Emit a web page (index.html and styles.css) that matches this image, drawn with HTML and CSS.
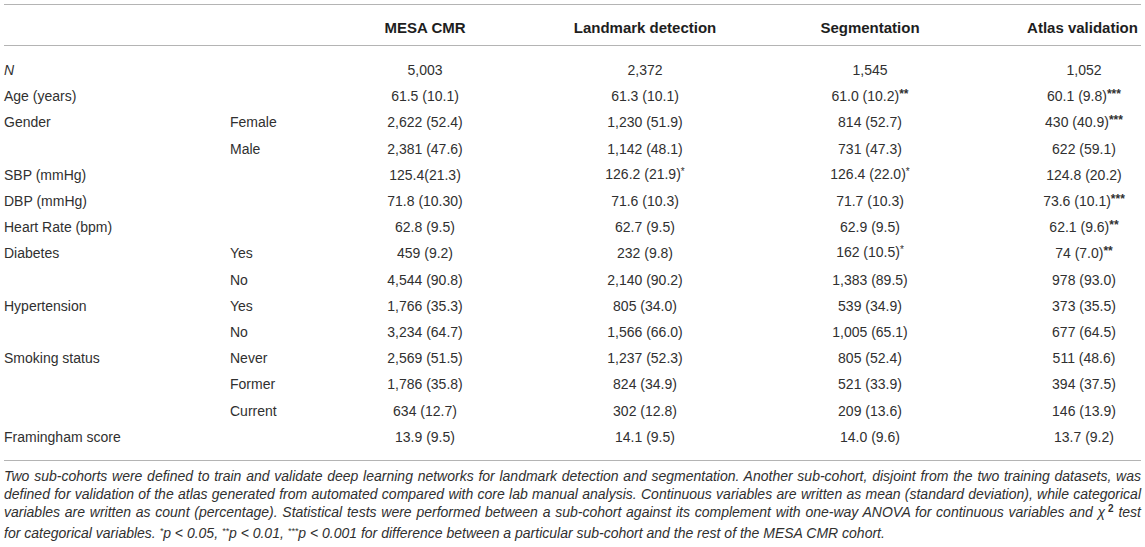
FILE: index.html
```html
<!DOCTYPE html>
<html lang="en">
<head>
<meta charset="utf-8">
<title>MESA CMR sub-cohorts</title>
<link rel="stylesheet" href="styles.css">
</head>
<body>
<div class="page">
  <table class="data">
    <colgroup>
      <col class="c-label">
      <col class="c-sub">
      <col class="c-mesa">
      <col class="c-land">
      <col class="c-seg">
      <col class="c-atlas">
    </colgroup>
    <thead>
      <tr>
        <th class="lbl"></th>
        <th class="sub"></th>
        <th>MESA CMR</th>
        <th>Landmark detection</th>
        <th>Segmentation</th>
        <th class="last">Atlas validation</th>
      </tr>
    </thead>
    <tbody>
      <tr class="first">
        <td class="lbl"><i>N</i></td><td class="sub"></td>
        <td>5,003</td><td>2,372</td><td>1,545</td><td class="last">1,052</td>
      </tr>
      <tr>
        <td class="lbl">Age (years)</td><td class="sub"></td>
        <td>61.5 (10.1)</td><td>61.3 (10.1)</td><td>61.0 (10.2)<span class="sig">**</span></td><td class="last">60.1 (9.8)<span class="sig">***</span></td>
      </tr>
      <tr>
        <td class="lbl">Gender</td><td class="sub">Female</td>
        <td>2,622 (52.4)</td><td>1,230 (51.9)</td><td>814 (52.7)</td><td class="last">430 (40.9)<span class="sig">***</span></td>
      </tr>
      <tr>
        <td class="lbl"></td><td class="sub">Male</td>
        <td>2,381 (47.6)</td><td>1,142 (48.1)</td><td>731 (47.3)</td><td class="last">622 (59.1)</td>
      </tr>
      <tr>
        <td class="lbl">SBP (mmHg)</td><td class="sub"></td>
        <td>125.4(21.3)</td><td>126.2 (21.9)<span class="sig1">*</span></td><td>126.4 (22.0)<span class="sig1">*</span></td><td class="last">124.8 (20.2)</td>
      </tr>
      <tr>
        <td class="lbl">DBP (mmHg)</td><td class="sub"></td>
        <td>71.8 (10.30)</td><td>71.6 (10.3)</td><td>71.7 (10.3)</td><td class="last">73.6 (10.1)<span class="sig">***</span></td>
      </tr>
      <tr>
        <td class="lbl">Heart Rate (bpm)</td><td class="sub"></td>
        <td>62.8 (9.5)</td><td>62.7 (9.5)</td><td>62.9 (9.5)</td><td class="last">62.1 (9.6)<span class="sig">**</span></td>
      </tr>
      <tr>
        <td class="lbl">Diabetes</td><td class="sub">Yes</td>
        <td>459 (9.2)</td><td>232 (9.8)</td><td>162 (10.5)<span class="sig1">*</span></td><td class="last">74 (7.0)<span class="sig">**</span></td>
      </tr>
      <tr>
        <td class="lbl"></td><td class="sub">No</td>
        <td>4,544 (90.8)</td><td>2,140 (90.2)</td><td>1,383 (89.5)</td><td class="last">978 (93.0)</td>
      </tr>
      <tr>
        <td class="lbl">Hypertension</td><td class="sub">Yes</td>
        <td>1,766 (35.3)</td><td>805 (34.0)</td><td>539 (34.9)</td><td class="last">373 (35.5)</td>
      </tr>
      <tr>
        <td class="lbl"></td><td class="sub">No</td>
        <td>3,234 (64.7)</td><td>1,566 (66.0)</td><td>1,005 (65.1)</td><td class="last">677 (64.5)</td>
      </tr>
      <tr>
        <td class="lbl">Smoking status</td><td class="sub">Never</td>
        <td>2,569 (51.5)</td><td>1,237 (52.3)</td><td>805 (52.4)</td><td class="last">511 (48.6)</td>
      </tr>
      <tr>
        <td class="lbl"></td><td class="sub">Former</td>
        <td>1,786 (35.8)</td><td>824 (34.9)</td><td>521 (33.9)</td><td class="last">394 (37.5)</td>
      </tr>
      <tr>
        <td class="lbl"></td><td class="sub">Current</td>
        <td>634 (12.7)</td><td>302 (12.8)</td><td>209 (13.6)</td><td class="last">146 (13.9)</td>
      </tr>
      <tr class="final">
        <td class="lbl">Framingham score</td><td class="sub"></td>
        <td>13.9 (9.5)</td><td>14.1 (9.5)</td><td>14.0 (9.6)</td><td class="last">13.7 (9.2)</td>
      </tr>
    </tbody>
  </table>
  <p class="caption">Two sub-cohorts were defined to train and validate deep learning networks for landmark detection and segmentation. Another sub-cohort, disjoint from the two training datasets, was defined for validation of the atlas generated from automated compared with core lab manual analysis. Continuous variables are written as mean (standard deviation), while categorical variables are written as count (percentage). Statistical tests were performed between a sub-cohort against its complement with one-way ANOVA for continuous variables and &chi;<span class="sq">2</span> test <span class="nw">for categorical</span> variables. <span class="st">*</span>p &lt; 0.05, <span class="st">**</span>p &lt; 0.01, <span class="st">***</span>p &lt; 0.001 for difference between a particular sub-cohort and the rest of the MESA CMR cohort.</p>
</div>
</body>
</html>
```

FILE: styles.css
```css
html, body {
  margin: 0;
  padding: 0;
  background: #ffffff;
}

body {
  font-family: "Liberation Sans", Arial, Helvetica, sans-serif;
  color: #303030;
}

.page {
  width: 1137px;
  padding: 4px 4px 0 4px;
}

.data {
  width: 1137px;
  border-collapse: collapse;
  table-layout: fixed;
  font-size: 14px;
}

.c-label { width: 224px; }
.c-sub { width: 112px; }
.c-mesa { width: 170px; }
.c-land { width: 270px; }
.c-seg { width: 180px; }
.c-atlas { width: 181px; }

.data th {
  font-size: 15px;
  font-weight: bold;
  color: #1e1e1e;
  text-align: center;
  white-space: nowrap;
  padding: 15px 0 9px 0;
  line-height: 16px;
  border-top: 1px solid #b4b4b4;
  border-bottom: 1px solid #b4b4b4;
}

.data th.last {
  padding-left: 64px;
}

.data td {
  text-align: center;
  white-space: nowrap;
  padding: 0;
  height: 26.2px;
  line-height: 16px;
  vertical-align: middle;
}

.data .lbl {
  text-align: left;
  padding-left: 0;
}

.data .sub {
  text-align: left;
  padding-left: 2px;
}

.data td.last {
  padding-left: 67px;
}

.data tr.first td {
  padding-top: 11px;
}

.data tr.final td {
  padding-bottom: 10px;
  border-bottom: 1px solid #b4b4b4;
}

.sig {
  font-weight: bold;
  font-size: 12px;
  position: relative;
  top: -3px;
}

.sig1 {
  font-size: 10px;
  position: relative;
  top: -4px;
}

.caption {
  margin: 6px 0 0 0;
  font-size: 14px;
  font-style: italic;
  line-height: 18.3px;
  text-align: justify;
  color: #303030;
}

.caption .nw {
  white-space: nowrap;
}

.caption .sq {
  font-weight: bold;
  font-style: normal;
  font-size: 10px;
  margin-left: 3px;
  position: relative;
  top: -5px;
}

.caption .st {
  font-size: 9px;
  position: relative;
  top: -4px;
}
```
